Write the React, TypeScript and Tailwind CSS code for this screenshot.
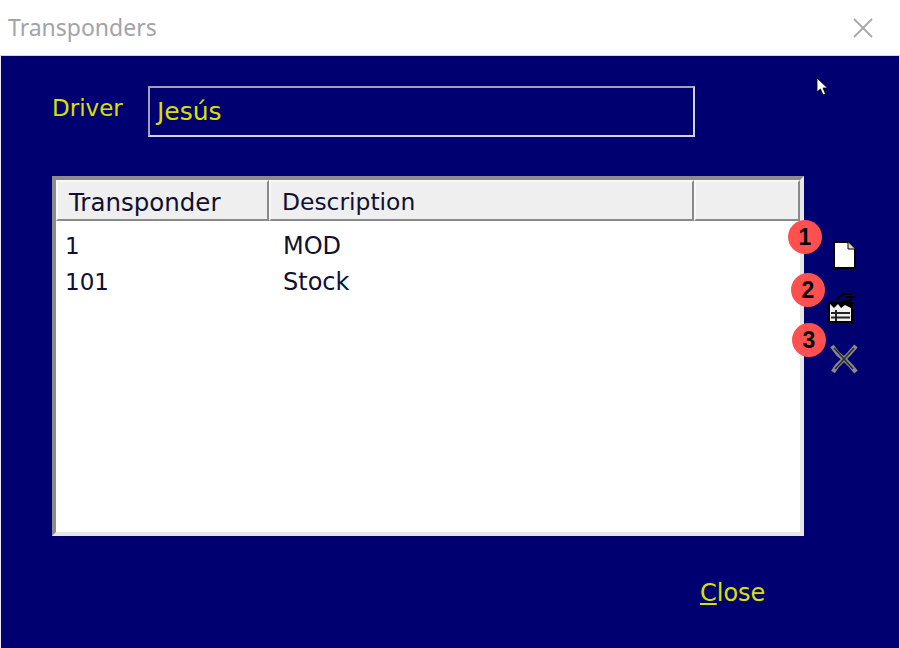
const font = "[font-family:'DejaVu_Sans',sans-serif]";

function Badge({ n, className }: { n: number; className: string }) {
  return (
    <div
      className={`absolute flex h-[34px] w-[34px] items-center justify-center rounded-full bg-[#ff5050] text-[23px] font-bold text-black [font-family:'Liberation_Sans',sans-serif] ${className}`}
    >
      {n}
    </div>
  );
}

function Head({ className, label, size }: { className: string; label?: string; size?: string }) {
  return (
    <div
      className={`flex h-[41px] items-center border-2 border-[#f8f8f8] border-r-[#8a8a8a] border-b-[#8a8a8a] bg-[#efefef] pl-[11px] pt-[5px] text-[#101030] ${size ?? ""} ${className}`}
    >
      {label}
    </div>
  );
}

function Row({ a, b }: { a: string; b: string }) {
  return (
    <div className="flex h-[36px] items-center text-[24px] text-[#101030]">
      <div className="w-[227px] pl-[9px] text-[23px]">{a}</div>
      <div>{b}</div>
    </div>
  );
}

export default function App() {
  return (
    <div className={`relative flex h-[648px] w-[900px] flex-col overflow-hidden bg-white ${font}`}>
      <div className="flex h-[56px] shrink-0 items-center justify-between border-b border-[#d5d5e0] pr-[26px] pl-[8px]">
        <span className="text-[23px] text-[#a3a3a8] [font-family:'Noto_Sans',sans-serif]">Transponders</span>
        <svg width="22" height="22" viewBox="0 0 22 22" className="text-[#a8a8a8]">
          <path d="M2 2 L20 20 M20 2 L2 20" stroke="currentColor" strokeWidth="1.8" fill="none" />
        </svg>
      </div>
      <div className="relative flex flex-1 flex-col border-r border-l border-[#e8e8f0] bg-[#000070] pt-[30px] pl-[51px] text-[#d8e000]">
        <div className="flex items-center">
          <span className="w-[96px] -translate-y-[3px] text-[23px]">Driver</span>
          <div className="flex h-[51px] w-[547px] items-center border-2 border-[#a0a0b8] border-r-[#d4d4e0] border-b-[#d4d4e0] pl-[7px] text-[25px]">
            Jesús
          </div>
        </div>
        <div className="mt-[39px] flex">
          <div className="flex h-[360px] w-[752px] flex-col border-4 border-[#8c8c8c] border-r-[#e6e6e6] border-b-[#e6e6e6] bg-white">
            <div className="flex shrink-0">
              <Head className="w-[213px]" size="text-[24.5px]" label="Transponder" />
              <Head className="w-[425px]" size="text-[23.4px]" label="Description" />
              <Head className="flex-1" />
            </div>
            <div className="pt-[7px]">
              <Row a="1" b="MOD" />
              <Row a="101" b="Stock" />
            </div>
          </div>
          <div className="ml-[24px] flex flex-col items-center pt-[64px]">
            <svg width="28" height="30" viewBox="0 0 28 30">
              <path d="M4 2 H18 L25 9 V28 H4 Z" fill="#fff" stroke="#000" strokeWidth="2" />
              <path d="M18 2 V9 H25" fill="#d8d8d8" stroke="#000" strokeWidth="1" />
            </svg>
            <svg width="30" height="34" viewBox="0 0 30 34" className="mt-[21px] -ml-[6px]">
              <path d="M10 9 L17 3 H26 M19 6 H27 L23 10 H15" fill="none" stroke="#000" strokeWidth="2.2" />
              <path d="M2 11 H27 V32 H2 Z" fill="#000" />
              <path d="M4 13 L8 17 L12 13 L15 17 L19 14 L25 17 V30 H4 Z" fill="#f0f0f0" />
              <path d="M5 22 H24 M5 26.5 H24 M10 19 V30" stroke="#222" strokeWidth="2" fill="none" />
            </svg>
            <svg width="30" height="30" viewBox="0 0 30 30" className="mt-[19px] ml-[1px]">
              <path d="M3 2 L9 10 L15 15 L22 22 L27 28 M27 2 L20 10 L15 15 L8 22 L4 28" stroke="#8a8a8a" strokeWidth="4.5" fill="none" />
              <path d="M5 4 L24 25 M25 4 L6 25" stroke="#2a2a2a" strokeWidth="1.5" fill="none" />
            </svg>
          </div>
        </div>
        <div className="mt-[39px] pl-[648px] text-[24px] leading-[36px]">
          <span className="underline decoration-2 underline-offset-2 [text-decoration-skip-ink:none]">C</span>lose
        </div>
      </div>
      <Badge n={1} className="top-[220px] left-[788px]" />
      <Badge n={2} className="top-[273px] left-[791px]" />
      <Badge n={3} className="top-[323px] left-[792px]" />
      <svg width="13" height="19" viewBox="0 0 13 19" className="absolute top-[77px] left-[816px]">
        <path d="M1 1 V15 L4.5 12 L7 18 L9.5 17 L7 11 H11.5 Z" fill="#fff" stroke="#000" strokeWidth="0.8" />
      </svg>
    </div>
  );
}
